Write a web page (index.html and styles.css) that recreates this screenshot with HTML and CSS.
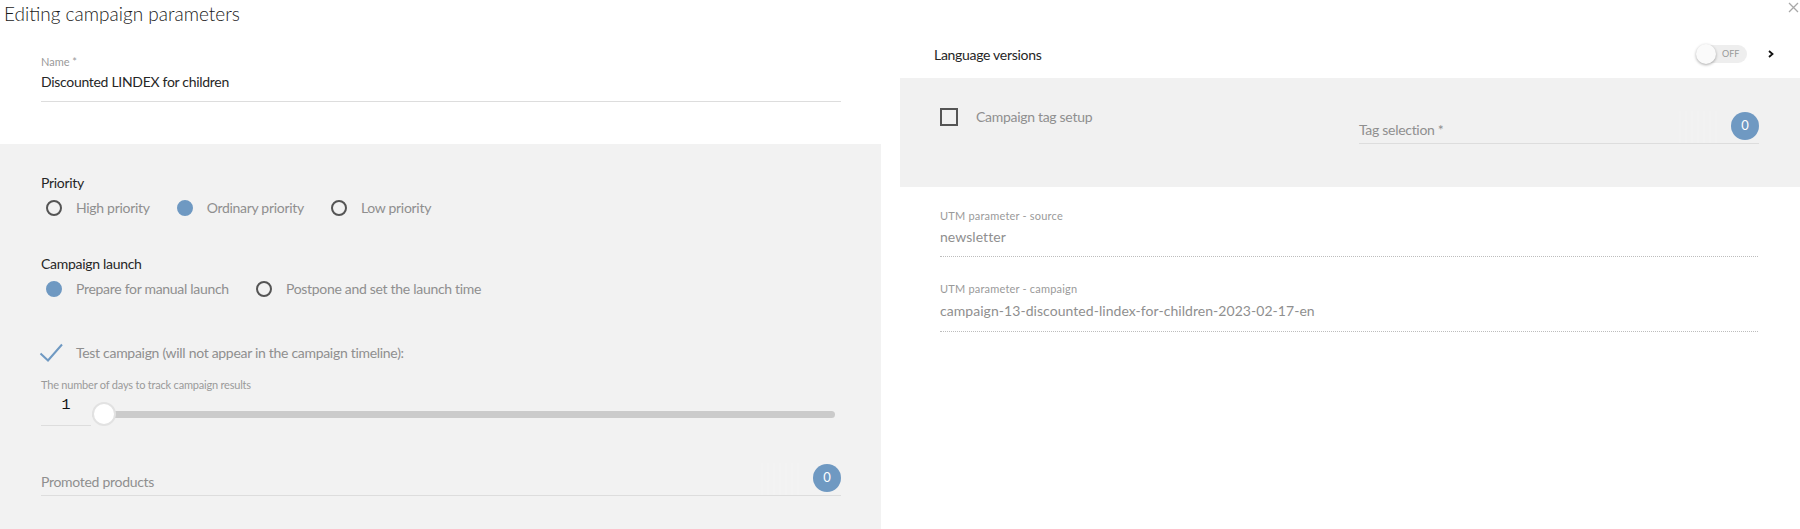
FILE: index.html
```html
<!DOCTYPE html>
<html>
<head>
<meta charset="utf-8">
<link rel="stylesheet" href="styles.css">
</head>
<body>
<div class="page">
  <div class="header">
    <h1 class="title">Editing campaign parameters</h1>
    <span class="close"><svg width="11" height="11" viewBox="0 0 11 11"><path d="M1 1L10 10M10 1L1 10" stroke="#a8a8a8" stroke-width="1.3" fill="none"/></svg></span>
  </div>
  <div class="columns">
    <div class="left">
      <div class="name-block">
        <div class="field name-field">
          <div class="small-label">Name *</div>
          <div class="value dark">Discounted LINDEX for children</div>
        </div>
      </div>
      <div class="panel">
        <div class="group-label">Priority</div>
        <div class="radio-row">
          <span class="radio"></span><span class="radio-text">High priority</span>
          <span class="radio checked"></span><span class="radio-text">Ordinary priority</span>
          <span class="radio"></span><span class="radio-text">Low priority</span>
        </div>
        <div class="group-label launch">Campaign launch</div>
        <div class="radio-row">
          <span class="radio checked"></span><span class="radio-text">Prepare for manual launch</span>
          <span class="radio"></span><span class="radio-text">Postpone and set the launch time</span>
        </div>
        <div class="test-row">
          <svg class="check" width="24" height="20" viewBox="0 0 24 20"><path d="M1.5 10.5L9 17.5L23 1.5" stroke="#6f99c2" stroke-width="2" fill="none"/></svg>
          <span class="radio-text">Test campaign (will not appear in the campaign timeline):</span>
        </div>
        <div class="small-label days">The number of days to track campaign results</div>
        <div class="slider-row">
          <div class="num">1</div>
          <div class="slider">
            <div class="track"></div>
            <div class="thumb"></div>
          </div>
        </div>
        <div class="badge-field promoted">
          <span class="placeholder">Promoted products</span>
          <span class="stripes"></span>
          <span class="badge">0</span>
        </div>
      </div>
    </div>
    <div class="right">
      <div class="lang-row">
        <span class="dark lang-text">Language versions</span>
        <span class="toggle"><span class="knob"></span><span class="off">OFF</span></span>
        <svg class="chev" width="6" height="8" viewBox="0 0 6 8"><path d="M1 1L4.5 4L1 7" stroke="#111" stroke-width="1.8" fill="none"/></svg>
      </div>
      <div class="tag-block">
        <div class="tag-check">
          <span class="checkbox"></span>
          <span class="radio-text">Campaign tag setup</span>
        </div>
        <div class="badge-field tag-field">
          <span class="placeholder">Tag selection *</span>
          <span class="stripes"></span>
          <span class="badge">0</span>
        </div>
      </div>
      <div class="utm">
        <div class="utm-field first">
          <div class="small-label">UTM parameter - source</div>
          <div class="value grey">newsletter</div>
        </div>
        <div class="utm-field second">
          <div class="small-label">UTM parameter - campaign</div>
          <div class="value grey">campaign-13-discounted-lindex-for-children-2023-02-17-en</div>
        </div>
      </div>
    </div>
  </div>
</div>
</body>
</html>
```
FILE: styles.css
```css
* { box-sizing: border-box; }
html, body { margin: 0; padding: 0; background: #fff; }
body {
  font-family: "Lato", "Open Sans", sans-serif;
  font-size: 14px;
  letter-spacing: -0.3px;
  color: #333;
  width: 1800px;
  height: 529px;
  overflow: hidden;
}
.page { position: relative; width: 1800px; height: 529px; }
.header { height: 30px; padding-left: 4px; }
.title {
  margin: 0;
  font-weight: 300;
  font-size: 19px;
  letter-spacing: 0;
  line-height: 30px;
  color: #1a1a1a;
  position: relative;
  top: -1px;
}
.close { position: absolute; top: 2px; right: 1px; line-height: 0; }
.columns { display: flex; height: 499px; }
.left { width: 881px; display: flex; flex-direction: column; }
.right { width: 900px; margin-left: 19px; }

.dark { color: #262626; }
.grey { color: #8f8f8f; letter-spacing: 0.05px; }
.small-label { font-size: 11px; line-height: 14px; color: #9a9a9a; letter-spacing: 0; }
.value { font-size: 14px; line-height: 20px; }

.name-block { height: 114px; padding: 25px 40px 0 41px; }
.name-field { border-bottom: 1px solid #ddd; padding-bottom: 9px; }
.name-field .value { margin-top: 3px; }

.panel { flex: 1; background: #f2f2f2; padding: 29px 40px 0 41px; }
.group-label { line-height: 20px; color: #262626; }
.group-label.launch { margin-top: 36px; }
.radio-row { display: flex; align-items: center; height: 20px; margin-top: 5px; }
.radio {
  width: 16px; height: 16px; border-radius: 50%;
  border: 2px solid #555; margin-left: 5px; margin-right: 14px; flex: none;
}
.radio + .radio-text + .radio { margin-left: 27px; }
.radio.checked { background: #6f99c2; border-color: #6f99c2; }
.radio-text { color: #8f8f8f; line-height: 20px; white-space: nowrap; }

.test-row { display: flex; align-items: center; height: 20px; margin-top: 44px; }
.check { margin-left: -2px; margin-right: 13px; flex: none; }
.small-label.days { margin-top: 15px; letter-spacing: -0.2px; }

.slider-row { display: flex; align-items: flex-start; margin-top: 0; }
.num {
  width: 50px; height: 34px; border-bottom: 1px solid #ddd;
  text-align: center; padding-top: 4px; line-height: 20px; letter-spacing: 0;
  font-family: "Liberation Mono", monospace; font-size: 15px; color: #111;
}
.slider { position: relative; width: 743px; height: 24px; margin-left: 1px; margin-top: 10px; }
.track { margin-top: 9px; height: 7px; border-radius: 4px; background: #cbcbcb; }
.thumb {
  position: absolute; left: 0; top: 0; width: 24px; height: 24px; border-radius: 50%;
  background: #fff; border: 2px solid #e2e2e2;
}

.badge-field {
  display: flex; align-items: flex-end; border-bottom: 1px solid #ddd;
  padding-bottom: 3px; position: relative;
}
.badge-field .placeholder { flex: 1; color: #8f8f8f; line-height: 20px; }
.promoted { margin-top: 37px; }
.badge {
  width: 28px; height: 28px; border-radius: 50%; background: #6f99c2; color: #fff;
  font-size: 13px; letter-spacing: 0; display: flex; align-items: center; justify-content: center; flex: none;
  padding-bottom: 2px;
}
.stripes {
  width: 40px; height: 32px; margin-right: 12px; margin-bottom: -3px;
  background: repeating-linear-gradient(90deg, rgba(255,255,255,0.35) 0 2px, rgba(0,0,0,0) 2px 6px);
  opacity: 0.25;
}

.lang-row { height: 48px; display: flex; align-items: center; padding-left: 34px; }
.lang-text { flex: 1; }
.toggle {
  position: relative; width: 50px; height: 18px; border-radius: 9px; background: #eee;
  margin-right: 21px; flex: none;
}
.knob {
  position: absolute; left: -1px; top: -1px; width: 20px; height: 20px; border-radius: 50%;
  background: #fafafa; box-shadow: 0 1px 3px rgba(0,0,0,0.35);
}
.off { position: absolute; left: 25px; top: 3px; font-size: 9px; line-height: 12px; color: #999; letter-spacing: 0; }
.chev { margin-right: 26px; flex: none; }

.tag-block { height: 109px; background: #f1f1f1; display: flex; padding: 30px 41px 0 40px; }
.tag-check { width: 419px; height: 18px; display: flex; align-items: center; }
.checkbox { width: 18px; height: 18px; border: 2px solid #555; margin-right: 18px; flex: none; }
.tag-field { width: 400px; height: 32px; margin-top: 4px; }

.utm { padding: 0 42px 0 40px; }
.utm-field { border-bottom: 1px dotted #bdbdbd; }
.utm-field .small-label { letter-spacing: 0.2px; }
.utm-field.first { margin-top: 22px; padding-bottom: 9px; }
.utm-field.first .value { margin-top: 4px; }
.utm-field.second { margin-top: 25px; padding-bottom: 10px; }
.utm-field.second .value { margin-top: 5px; }
```
